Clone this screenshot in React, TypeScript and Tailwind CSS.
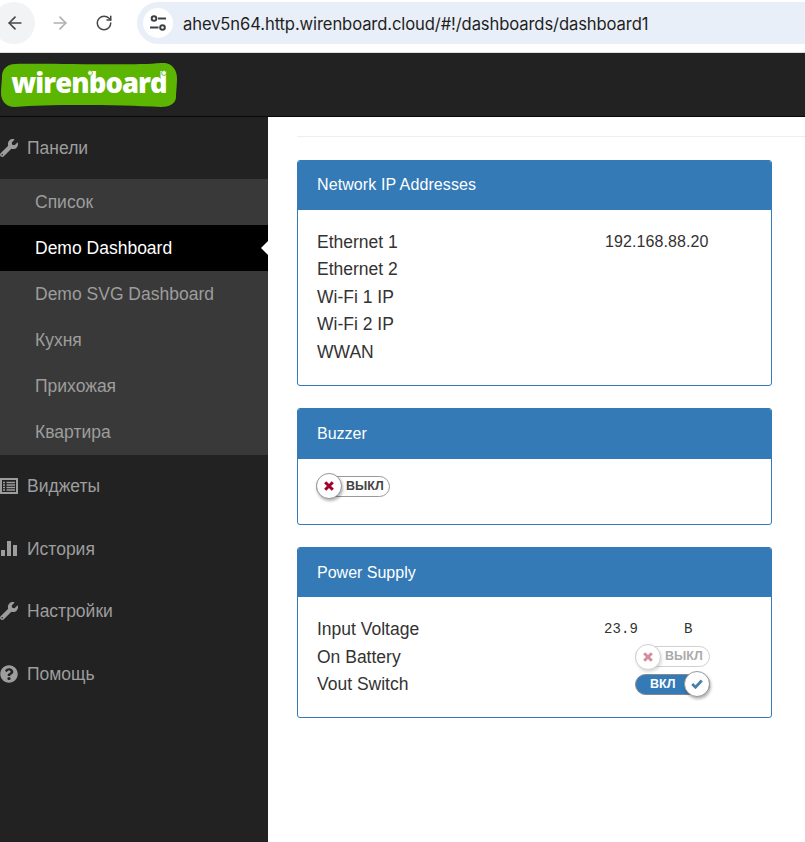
import React from "react";
import { ArrowLeft, ArrowRight, RotateCw } from "lucide-react";
import { FaWrench, FaQuestionCircle } from "react-icons/fa";

function Tune() {
  return (
    <svg width="20" height="18" viewBox="0 0 20 18" fill="none" stroke="#3c4043" strokeWidth="2">
      <circle cx="6" cy="4.5" r="2.3" />
      <path d="M10 4.5H18" />
      <circle cx="14.5" cy="13.5" r="2.3" />
      <path d="M2 13.5H10.5" />
    </svg>
  );
}

function Bars() {
  return (
    <svg width="18" height="15" viewBox="0 0 18 15" fill="#9d9d9d">
      <rect x="1" y="9" width="4" height="6" />
      <rect x="7" y="0" width="4" height="15" />
      <rect x="13" y="4" width="4" height="11" />
    </svg>
  );
}

function ListAlt() {
  return (
    <svg width="18" height="16" viewBox="0 0 18 16" fill="none" stroke="#9d9d9d">
      <rect x="1" y="1" width="16" height="14" strokeWidth="2" />
      <path d="M3 4.5H5M3 7H5M3 9.5H5M3 12H5M6.5 4.5H15M6.5 7H15M6.5 9.5H15M6.5 12H15" strokeWidth="1.5" />
    </svg>
  );
}

function Logo() {
  return (
    <div className="relative ml-px h-[44px] w-[176px] flex items-center justify-center">
      <svg className="absolute inset-0" width="176" height="44" viewBox="0 0 176 44">
        <path
          d="M14 1C50 0 130 3 160 0C170 -1 176 6 176 15C176 22 175 30 175 35C174 41 168 44 160 44C120 42 50 41 14 44C5 44 0 38 0 30C0 23 1 18 1 12C2 5 7 1 14 1Z"
          fill="#5cb500"
        />
      </svg>
      <span className="relative text-white text-[27.4px] font-extrabold tracking-[-0.9px] leading-none font-['Open_Sans',sans-serif] -mt-[4px]">
        wirenboard
      </span>
      <svg className="absolute inset-0" width="176" height="44" viewBox="0 0 176 44" fill="#fff" stroke="#5cb500" strokeWidth="0.8">
        <circle cx="89" cy="10" r="2.4" />
        <circle cx="163" cy="10" r="2.4" />
      </svg>
    </div>
  );
}

function Top({ icon, label, h, labelClass }: { icon: React.ReactNode; label: string; h: string; labelClass: string }) {
  return (
    <div className={`flex items-center ${h} text-[#9d9d9d]`}>
      <span className="w-[27px] flex items-center">{icon}</span>
      <span className={labelClass}>{label}</span>
    </div>
  );
}

function Sub({ label, active }: { label: string; active?: boolean }) {
  return (
    <div className={`relative h-[46px] pl-[35px] flex items-center ${active ? "bg-black text-white" : "text-[#9d9d9d]"}`}>
      <span className="pt-[2px]">{label}</span>
      {active && (
        <span className="absolute right-0 top-[16px] w-0 h-0 border-y-[7px] border-y-transparent border-r-[7px] border-r-white" />
      )}
    </div>
  );
}

function Cross() {
  return (
    <svg width="10" height="10" viewBox="0 0 10 10" stroke="currentColor" strokeWidth="3">
      <path d="M1.2 1.2L8.8 8.8M8.8 1.2L1.2 8.8" />
    </svg>
  );
}

function Tick() {
  return (
    <svg width="12" height="10" viewBox="0 0 12 10" fill="none" stroke="currentColor" strokeWidth="2.8">
      <path d="M1.2 5L4.5 8.2L10.8 1.5" />
    </svg>
  );
}

function Toggle({ on, dim }: { on?: boolean; dim?: boolean }) {
  if (on) {
    return (
      <div className="relative w-[75px] h-[26px] flex items-center">
        <div className="w-full h-[21px] rounded-full bg-[#337ab7] border border-[#888] text-white text-[12.5px] font-bold pl-[14px] leading-[18px]">
          ВКЛ
        </div>
        <div className="absolute right-0 top-0 w-[26px] h-[26px] rounded-full bg-white border border-[#999] shadow-[1px_2px_3px_rgba(0,0,0,0.3)] flex items-center justify-center text-[#4a7fa8]">
          <Tick />
        </div>
      </div>
    );
  }
  return (
    <div className={`relative h-[26px] flex items-center ${dim ? "w-[75px] opacity-45" : "w-[74px]"}`}>
      <div className="w-full h-[21px] rounded-full bg-white border border-[#999] text-[#444] text-[12.5px] font-bold pl-[29px] leading-[18px]">
        ВЫКЛ
      </div>
      <div className="absolute left-0 top-0 w-[26px] h-[26px] rounded-full bg-white border border-[#999] shadow-[1px_2px_3px_rgba(0,0,0,0.3)] flex items-center justify-center text-[#a5002a]">
        <Cross />
      </div>
    </div>
  );
}

function Panel({ title, children, bodyClass, titleClass, headClass }: { title: string; children: React.ReactNode; bodyClass: string; titleClass?: string; headClass: string }) {
  return (
    <section className="w-[475px] rounded-[3px] border border-[#337ab7] overflow-hidden">
      <div className={`${headClass} bg-[#337ab7] text-white text-[16px] pl-[19px] flex items-center`}>
        <span className={titleClass}>{title}</span>
      </div>
      <div className={bodyClass}>{children}</div>
    </section>
  );
}

function Row({ label, children }: { label: string; children?: React.ReactNode }) {
  return (
    <div className="flex items-center h-[27.5px] text-[#333] text-[17.5px]">
      <span className="w-[288px]">{label}</span>
      {children}
    </div>
  );
}

export default function App() {
  return (
    <div className="w-[805px] h-[842px] overflow-hidden bg-white font-['Liberation_Sans',Arial,sans-serif] text-[17.5px] flex flex-col">
      <div className="h-[53px] shrink-0 bg-white flex items-start pt-[2px] relative border-b border-[#ddd]">
        <div className="w-[42px] h-[42px] -ml-[7px] rounded-full bg-[#f1f3f4] flex items-center justify-center text-[#474747]">
          <ArrowLeft size={20} strokeWidth={2} className="ml-[1px]" />
        </div>
        <div className="ml-[4px] w-[42px] h-[42px] flex items-center justify-center text-[#b0b0b0]">
          <ArrowRight size={20} strokeWidth={2} />
        </div>
        <div className="w-[46px] h-[42px] flex items-center justify-center text-[#474747]">
          <RotateCw size={18} strokeWidth={2} />
        </div>
        <div className="ml-[10px] flex-1 h-[42px] rounded-l-full bg-[#e9eff8] flex items-center pl-[6px]">
          <div className="w-[30px] h-[30px] rounded-full bg-white flex items-center justify-center">
            <Tune />
          </div>
          <span className="ml-[10px] mt-[2px] text-[16.6px] text-[#1f1f1f] font-['Inter','Noto_Sans',sans-serif] tracking-[-0.11px]">
            ahev5n64.http.wirenboard.cloud/#!/dashboards/dashboard1
          </span>
        </div>
      </div>
      <header className="h-[64px] shrink-0 bg-[#222] border-b border-[#080808] flex items-center">
        <Logo />
      </header>
      <div className="flex flex-1 min-h-0">
        <aside className="w-[268px] shrink-0 bg-[#222] leading-none">
          <Top h="h-[62px]" labelClass="pt-[2px]" label="Панели" icon={<FaWrench size={18} />} />
          <div className="bg-[#393939]">
            <Sub label="Список" />
            <Sub label="Demo Dashboard" active />
            <Sub label="Demo SVG Dashboard" />
            <Sub label="Кухня" />
            <Sub label="Прихожая" />
            <Sub label="Квартира" />
          </div>
          <Top h="h-[62.5px]" labelClass="pt-[1px]" label="Виджеты" icon={<ListAlt />} />
          <Top h="h-[62.5px]" labelClass="pt-[1px]" label="История" icon={<Bars />} />
          <Top h="h-[62.5px]" labelClass="pt-[1px]" label="Настройки" icon={<FaWrench size={18} />} />
          <Top h="h-[62.5px]" labelClass="pt-[1px]" label="Помощь" icon={<FaQuestionCircle size={18} />} />
        </aside>
        <main className="flex-1 min-w-0 pl-[29px]">
          <div className="h-[20px] border-b border-[#eee] -mr-[10px]" />
          <div className="pt-[23px] flex flex-col gap-[22px]">
            <Panel title="Network IP Addresses" headClass="h-[49px]" titleClass="-mt-[2px] tracking-[0.1px]" bodyClass="pl-[19px] pt-[18px] pb-[19.5px]">
              <Row label="Ethernet 1"><span className="text-[16px] tracking-[0.08px]">192.168.88.20</span></Row>
              <Row label="Ethernet 2" />
              <Row label="Wi-Fi 1 IP" />
              <Row label="Wi-Fi 2 IP" />
              <Row label="WWAN" />
            </Panel>
            <Panel title="Buzzer" headClass="h-[50px]" titleClass="-mt-[1px]" bodyClass="pl-[18px] pt-[14px] pb-[25px]">
              <Toggle />
            </Panel>
            <Panel title="Power Supply" headClass="h-[49px]" titleClass="mt-[1px]" bodyClass="pl-[19px] pt-[18.5px] pb-[19px]">
              <Row label="Input Voltage">
                <span className="font-['Liberation_Mono',monospace] text-[14px] flex pt-[1px]">
                  <span className="w-[80px] -ml-[1px] tracking-[0.1px]">23.9</span>
                  <span>В</span>
                </span>
              </Row>
              <Row label="On Battery">
                <span className="ml-[30px]"><Toggle dim /></span>
              </Row>
              <Row label="Vout Switch">
                <span className="ml-[30px]"><Toggle on /></span>
              </Row>
            </Panel>
          </div>
        </main>
      </div>
    </div>
  );
}
